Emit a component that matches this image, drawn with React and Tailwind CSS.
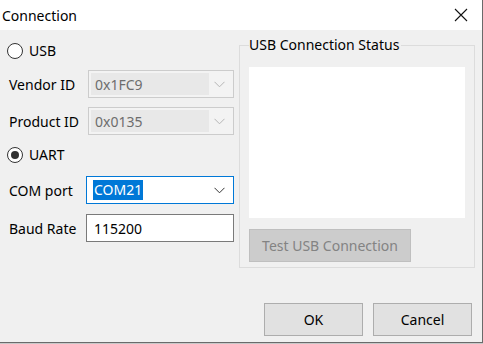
import React from 'react';

const font = { fontFamily: '"Noto Sans", "Open Sans", sans-serif' };

const Chevron = ({ color = '#7a7a7a' }) => (
  <svg width="11" height="7" viewBox="0 0 11 7" fill="none">
    <path d="M0.5 0.8 L5.5 5.8 L10.5 0.8" stroke={color} strokeWidth="1" />
  </svg>
);

const Radio = ({ checked, label }) => (
  <div className="flex items-center h-[16px] pl-[7px]">
    <div className="w-[16px] h-[16px] rounded-full border border-[#333333] bg-white flex items-center justify-center">
      {checked && <div className="w-[8px] h-[8px] rounded-full bg-[#333333]" />}
    </div>
    <span className="ml-[6px] text-[14px] text-black leading-none">{label}</span>
  </div>
);

const DisabledCombo = ({ label, value }) => (
  <div className="flex items-center h-[28px]">
    <span className="pl-[9px] w-[88px] text-[14px] text-black">{label}</span>
    <div className="w-[146px] h-[28px] border border-[#cccccc] bg-[#f3f3f3] flex items-center pl-[2px] pr-[8px]">
      <div className="w-[118px] h-[22px] bg-[#e8e8e8] flex items-center pl-[4px] text-[14px] text-[#6d6d6d]">
        {value}
      </div>
      <div className="flex-1" />
      <Chevron color="#b5b5b5" />
    </div>
  </div>
);

export default function App() {
  return (
    <div className="w-[483px] h-[344px] bg-[#f0f0f0] flex flex-col overflow-hidden" style={font}>
      <div className="flex flex-col flex-1 border-r border-[#6a6a6a]">
        {/* title bar */}
        <div className="h-[30px] bg-white flex items-center justify-between pl-[2px] pr-[14px]">
          <span className="text-[14px] text-black">Connection</span>
          <svg width="14" height="14" viewBox="0 0 14 14">
            <path d="M1 1 L13 13 M13 1 L1 13" stroke="#111" strokeWidth="1.1" />
          </svg>
        </div>

        <div className="flex">
          {/* left column */}
          <div className="w-[239px] flex flex-col pt-[13px]">
            <Radio label="USB" />
            <div className="mt-[11px]">
              <DisabledCombo label="Vendor ID" value="0x1FC9" />
            </div>
            <div className="mt-[9px]">
              <DisabledCombo label="Product ID" value="0x0135" />
            </div>
            <div className="mt-[12px]">
              <Radio checked label="UART" />
            </div>
            <div className="mt-[13px] flex items-center h-[28px]">
              <span className="pl-[9px] w-[86px] text-[14px] text-black">COM port</span>
              <div className="w-[148px] h-[28px] border border-[#0078d7] bg-white flex items-center pl-[6px] pr-[8px]">
                <span className="bg-[#0078d7] text-white text-[14px] leading-[20px] h-[20px] px-[1px]">COM21</span>
                <div className="flex-1" />
                <Chevron color="#333333" />
              </div>
            </div>
            <div className="mt-[10px] flex items-center h-[28px]">
              <span className="pl-[9px] w-[86px] text-[14px] text-black">Baud Rate</span>
              <div className="w-[148px] h-[28px] border border-[#7a7a7a] bg-white flex items-center pl-[7px] text-[14px] text-black">
                115200
              </div>
            </div>
          </div>

          {/* group box */}
          <div className="mt-[15px] w-[236px] h-[223px] border border-[#dcdcdc] flex flex-col px-[9px]">
            <div className="-mt-[11px] h-[20px] flex">
              <span className="bg-[#f0f0f0] text-[14px] text-black leading-[20px] pr-[2px]">USB Connection Status</span>
            </div>
            <div className="mt-[12px] w-[216px] h-[151px] bg-white" />
            <div className="mt-[11px] w-[162px] h-[33px] border border-[#bfbfbf] bg-[#cccccc] flex items-center justify-center text-[14px] text-[#838383]">
              Test USB Connection
            </div>
          </div>
        </div>

        {/* buttons */}
        <div className="mt-[35px] flex justify-end gap-[10px] pr-[10px]">
          <div className="w-[99px] h-[33px] border border-[#adadad] bg-[#e1e1e1] flex items-center justify-center text-[14px] text-black">OK</div>
          <div className="w-[99px] h-[33px] border border-[#adadad] bg-[#e1e1e1] flex items-center justify-center text-[14px] text-black">Cancel</div>
        </div>
        <div className="flex-1" />
        <div className="h-[1px] bg-[#6a6a6a] mr-[-1px]" />
      </div>
      <div className="h-[1px] bg-[#c8c8c8]" />
    </div>
  );
}
